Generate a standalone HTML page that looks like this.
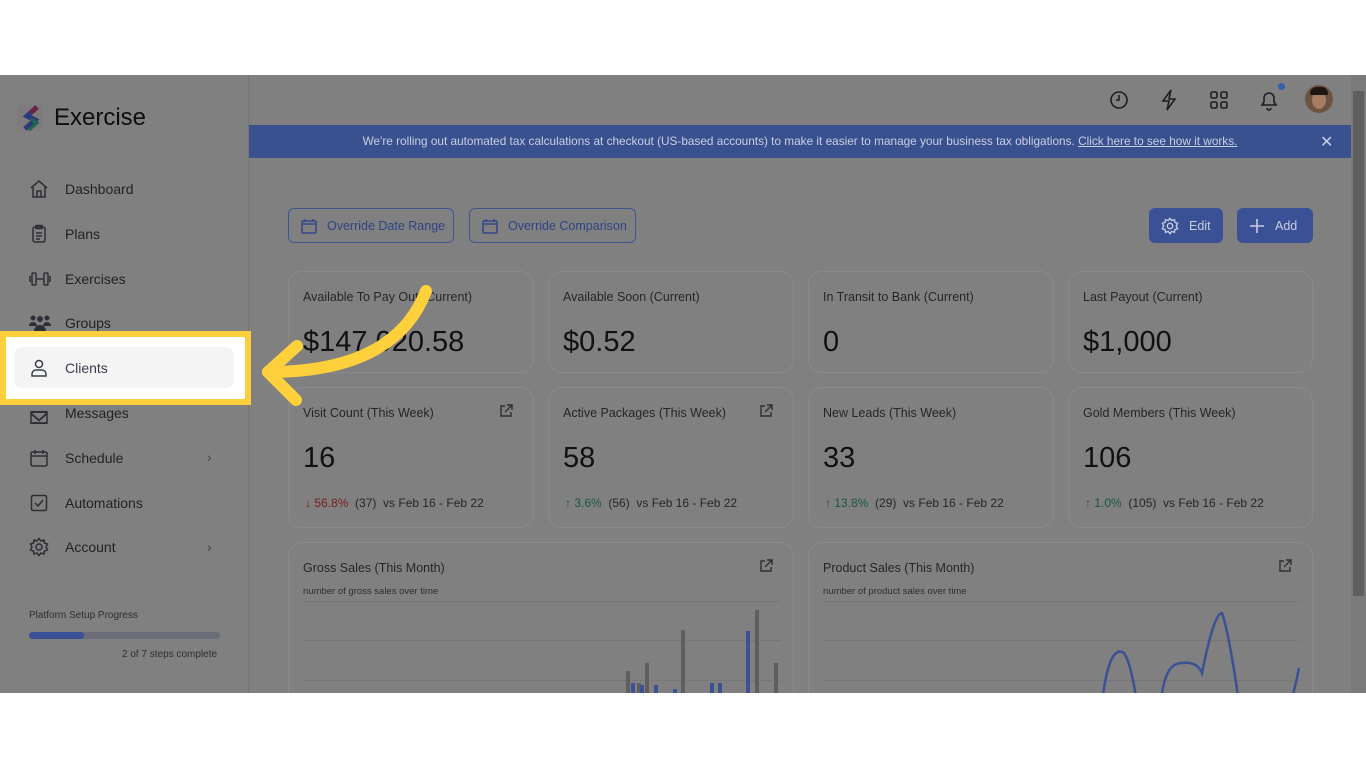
<!DOCTYPE html>
<html><head><meta charset="utf-8"><style>
*{box-sizing:border-box;margin:0;padding:0}
body{width:1366px;height:768px;background:#fff;font-family:"Liberation Sans",sans-serif;position:relative;overflow:hidden}
.app{position:absolute;left:0;top:75px;width:1366px;height:618px;background:#808080;overflow:hidden}
.side{position:absolute;left:0;top:0;width:249px;height:618px;border-right:1px solid #767676;background:#808080}
.abs{position:absolute}
.nav{position:absolute;left:65px;font-size:14px;color:#222226}
.ico{position:absolute;left:29px}
.card{position:absolute;border:1px solid #8a8a8a;border-radius:14px;background:#808080}
.lbl{position:absolute;left:14px;top:18px;font-size:12.5px;color:#26262a}
.big{position:absolute;left:14px;top:54px;font-size:29px;color:#111113}
.ext{position:absolute;right:20px;top:16px}
.foot{position:absolute;left:16px;top:108px;font-size:12px;color:#26262a;white-space:nowrap}
.btn{position:absolute;top:133px;height:35px;border:1px solid #3d5591;border-radius:6px;font-size:12.5px;color:#2f4485;display:flex;align-items:center;padding-left:12px;gap:10px}
.bbtn{position:absolute;top:133px;height:35px;background:#3a5195;border-radius:6px;font-size:12.5px;color:#c8cde0;display:flex;align-items:center;padding-left:12px;gap:10px}
.grid{position:absolute;left:14px;right:12px;border-top:1px dotted #6e6e6e}
</style></head><body>
<div class="app">
<div class="side">
  <svg class="abs" style="left:17px;top:30px" width="26" height="26" viewBox="0 0 26 26"><rect width="26" height="26" rx="4" fill="#7d7478" opacity=".5"/><path d="M20 2 L10 11 L18 15 L8 24" stroke="#2b3a7a" stroke-width="5" fill="none"/><path d="M14 14 L20 18 L12 25" stroke="#1d6a4a" stroke-width="3" fill="none"/><path d="M20 2 L14 8" stroke="#7a1f3a" stroke-width="4"/></svg>
  <div class="abs" style="left:54px;top:29px;font-size:24px;color:#0e0e10">Exercise</div>
  <svg class="ico" style="top:104px" width="20" height="20" viewBox="0 0 20 20" fill="none" stroke="#2e2e34" stroke-width="1.5"><path d="M2 9 L10 2 L18 9 M4 8 V18 H16 V8 M8 18 V12 H12 V18"/></svg>
  <div class="nav" style="top:106px">Dashboard</div>
  <svg class="ico" style="top:149px" width="20" height="20" viewBox="0 0 20 20" fill="none" stroke="#2e2e34" stroke-width="1.5"><rect x="4" y="3" width="12" height="15" rx="2"/><rect x="7" y="1.5" width="6" height="3"/><path d="M7 9h6M7 12h6M7 15h4"/></svg>
  <div class="nav" style="top:151px">Plans</div>
  <svg class="ico" style="top:194px" width="22" height="20" viewBox="0 0 22 20" fill="none" stroke="#2e2e34" stroke-width="1.5"><rect x="3" y="4" width="4" height="12" rx="1"/><rect x="15" y="4" width="4" height="12" rx="1"/><path d="M1 7v6M21 7v6M7 10h8"/></svg>
  <div class="nav" style="top:196px">Exercises</div>
  <svg class="ico" style="top:239px" width="22" height="18" viewBox="0 0 22 18" fill="#2e2e34"><circle cx="4" cy="4" r="2.5"/><circle cx="11" cy="5" r="3"/><circle cx="18" cy="4" r="2.5"/><path d="M0 12a4 4 0 0 1 8 0zM14 12a4 4 0 0 1 8 0zM5 17a6 6 0 0 1 12 0z"/></svg>
  <div class="nav" style="top:240px">Groups</div>
  <svg class="ico" style="top:329px" width="20" height="20" viewBox="0 0 20 20" fill="none" stroke="#2e2e34" stroke-width="1.5"><path d="M2 18 V10 H18 V18 Z M2 11 L10 16 L18 11" transform="translate(0,-6) scale(1,1.4)"/></svg>
  <div class="nav" style="top:330px">Messages</div>
  <svg class="ico" style="top:373px" width="20" height="20" viewBox="0 0 20 20" fill="none" stroke="#2e2e34" stroke-width="1.5"><rect x="2" y="4" width="16" height="14" rx="1.5"/><path d="M2 8h16M6 2v4M14 2v4"/></svg>
  <div class="nav" style="top:375px">Schedule</div>
  <div class="abs" style="left:207px;top:374px;font-size:14px;color:#444">›</div>
  <svg class="ico" style="top:418px" width="20" height="20" viewBox="0 0 20 20" fill="none" stroke="#2e2e34" stroke-width="1.5"><rect x="2.5" y="2.5" width="15" height="15" rx="1.5"/><path d="M6 10l3 3 5-6"/></svg>
  <div class="nav" style="top:420px">Automations</div>
  <svg class="ico" style="top:462px" width="20" height="20" viewBox="0 0 20 20" fill="none" stroke="#2e2e34" stroke-width="1.5"><circle cx="10" cy="10" r="3"/><path d="M10 1.5l2 2.5 3-1 .5 3 3 1-1.5 3 1.5 3-3 1-.5 3-3-1-2 2.5-2-2.5-3 1-.5-3-3-1L3 10 1.5 7l3-1 .5-3 3 1z"/></svg>
  <div class="nav" style="top:464px">Account</div>
  <div class="abs" style="left:207px;top:464px;font-size:14px;color:#444">›</div>
  <div class="abs" style="left:29px;top:535px;font-size:10px;color:#2e2e34">Platform Setup Progress</div>
  <div class="abs" style="left:29px;top:557px;width:191px;height:7px;border-radius:4px;background:#6b6e7a"></div>
  <div class="abs" style="left:29px;top:557px;width:55px;height:7px;border-radius:4px;background:#3a5195"></div>
  <div class="abs" style="left:122px;top:574px;font-size:10px;color:#2e2e34">2 of 7 steps complete</div>
</div>
<svg class="abs" style="left:1109px;top:15px" width="20" height="20" viewBox="0 0 20 20" fill="none" stroke="#1e1e22" stroke-width="1.6"><circle cx="10" cy="10" r="8"/><path d="M10 5v5h-3"/></svg>
<svg class="abs" style="left:1160px;top:14px" width="18" height="22" viewBox="0 0 18 22" fill="none" stroke="#1e1e22" stroke-width="1.6"><path d="M11 1L3 12h6l-2 9 8-11H9z"/></svg>
<svg class="abs" style="left:1210px;top:16px" width="18" height="18" viewBox="0 0 18 18" fill="none" stroke="#1e1e22" stroke-width="1.6"><rect x="1" y="1" width="6" height="6" rx="1.5"/><rect x="11" y="1" width="6" height="6" rx="1.5"/><rect x="1" y="11" width="6" height="6" rx="1.5"/><rect x="11" y="11" width="6" height="6" rx="1.5"/></svg>
<svg class="abs" style="left:1259px;top:14px" width="20" height="22" viewBox="0 0 20 22" fill="none" stroke="#1e1e22" stroke-width="1.6"><path d="M3 16h14l-2-3V9a5 5 0 0 0-10 0v4z M8 19a2 2 0 0 0 4 0"/></svg>
<div class="abs" style="left:1278px;top:8px;width:7px;height:7px;border-radius:50%;background:#3a5ab0"></div>
<div class="abs" style="left:1305px;top:10px;width:28px;height:28px;border-radius:50%;background:#6e5342;overflow:hidden"><div style="position:absolute;left:7px;top:6px;width:14px;height:18px;border-radius:50%;background:#a57d62"></div><div style="position:absolute;left:5px;top:2px;width:18px;height:8px;border-radius:8px 8px 2px 2px;background:#1c1512"></div></div>
<div class="abs" style="left:249px;top:50px;width:1102px;height:33px;background:#3a5190;color:#c9cfe0;font-size:11.8px;text-align:center;line-height:33px">We're rolling out automated tax calculations at checkout (US-based accounts) to make it easier to manage your business tax obligations. <u>Click here to see how it works.</u></div>
<div class="abs" style="left:1320px;top:57px;color:#c9cfe0;font-size:16px">✕</div>
<div class="abs" style="left:1351px;top:0;width:15px;height:618px;background:#7a7a7a"></div>
<div class="abs" style="left:1353px;top:16px;width:11px;height:505px;background:#5f5f5f"></div>
<div class="btn" style="left:288px;width:166px"><svg width="16" height="16" viewBox="0 0 16 16" fill="none" stroke="#34488a" stroke-width="1.6"><rect x="1" y="3" width="14" height="12" rx="1"/><path d="M1 6h14M4 1v3M12 1v3"/></svg>Override Date Range</div>
<div class="btn" style="left:469px;width:167px"><svg width="16" height="16" viewBox="0 0 16 16" fill="none" stroke="#34488a" stroke-width="1.6"><rect x="1" y="3" width="14" height="12" rx="1"/><path d="M1 6h14M4 1v3M12 1v3"/></svg>Override Comparison</div>
<div class="bbtn" style="left:1149px;width:74px"><svg width="18" height="18" viewBox="0 0 20 20" fill="none" stroke="#c8cde0" stroke-width="1.5"><circle cx="10" cy="10" r="3"/><path d="M10 1.5l2 2.5 3-1 .5 3 3 1-1.5 3 1.5 3-3 1-.5 3-3-1-2 2.5-2-2.5-3 1-.5-3-3-1L3 10 1.5 7l3-1 .5-3 3 1z"/></svg>Edit</div>
<div class="bbtn" style="left:1237px;width:76px"><svg width="16" height="16" viewBox="0 0 16 16" stroke="#c8cde0" stroke-width="1.6"><path d="M8 1v14M1 8h14"/></svg>Add</div>
<div class="card" style="left:288px;top:196px;width:246px;height:102px"><div class="lbl">Available To Pay Out (Current)</div><div class="big">$147,020.58</div></div>
<div class="card" style="left:548px;top:196px;width:246px;height:102px"><div class="lbl">Available Soon (Current)</div><div class="big">$0.52</div></div>
<div class="card" style="left:808px;top:196px;width:246px;height:102px"><div class="lbl">In Transit to Bank (Current)</div><div class="big">0</div></div>
<div class="card" style="left:1068px;top:196px;width:245px;height:102px"><div class="lbl">Last Payout (Current)</div><div class="big">$1,000</div></div>
<div class="card" style="left:288px;top:312px;width:246px;height:141px"><div class="lbl">Visit Count (This Week)</div><svg class="ext" width="14" height="14" viewBox="0 0 14 14" fill="none" stroke="#2e2e34" stroke-width="1.4"><path d="M6 2H2v10h10V8M8 1h5v5M13 1L6 8"/></svg><div class="big">16</div><div class="foot"><span style="color:#7a1c1c">↓ 56.8%</span> &nbsp;(37) &nbsp;vs Feb 16 - Feb 22</div></div>
<div class="card" style="left:548px;top:312px;width:246px;height:141px"><div class="lbl">Active Packages (This Week)</div><svg class="ext" width="14" height="14" viewBox="0 0 14 14" fill="none" stroke="#2e2e34" stroke-width="1.4"><path d="M6 2H2v10h10V8M8 1h5v5M13 1L6 8"/></svg><div class="big">58</div><div class="foot"><span style="color:#1a573b">↑ 3.6%</span> &nbsp;(56) &nbsp;vs Feb 16 - Feb 22</div></div>
<div class="card" style="left:808px;top:312px;width:246px;height:141px"><div class="lbl">New Leads (This Week)</div><div class="big">33</div><div class="foot"><span style="color:#1a573b">↑ 13.8%</span> &nbsp;(29) &nbsp;vs Feb 16 - Feb 22</div></div>
<div class="card" style="left:1068px;top:312px;width:245px;height:141px"><div class="lbl">Gold Members (This Week)</div><div class="big">106</div><div class="foot"><span style="color:#1a573b">↑ 1.0%</span> &nbsp;(105) &nbsp;vs Feb 16 - Feb 22</div></div>
<div class="card" style="left:288px;top:467px;width:506px;height:200px">
 <div class="lbl">Gross Sales (This Month)</div><svg class="ext" width="14" height="14" viewBox="0 0 14 14" fill="none" stroke="#2e2e34" stroke-width="1.4"><path d="M6 2H2v10h10V8M8 1h5v5M13 1L6 8"/></svg>
 <div class="abs" style="left:14px;top:43px;font-size:9.5px;color:#2e2e34">number of gross sales over time</div>
 <div class="grid" style="top:58px"></div><div class="grid" style="top:97px"></div><div class="grid" style="top:137px"></div>
 <svg class="abs" style="left:0;top:60px" width="506" height="100"><g stroke-width="4"><path d="M339 68V100M358 60V100M394 27V100M468 7V100M487 60V100M350 80V100" stroke="#5e5e5e"/><path d="M344 80V100M353 82V100M367 82V100M386 86V100M423 80V100M431 80V100M459 28V100" stroke="#3a5195"/></g></svg>
</div>
<div class="card" style="left:808px;top:467px;width:505px;height:200px">
 <div class="lbl">Product Sales (This Month)</div><svg class="ext" width="14" height="14" viewBox="0 0 14 14" fill="none" stroke="#2e2e34" stroke-width="1.4"><path d="M6 2H2v10h10V8M8 1h5v5M13 1L6 8"/></svg>
 <div class="abs" style="left:14px;top:43px;font-size:9.5px;color:#2e2e34">number of product sales over time</div>
 <div class="grid" style="top:58px"></div><div class="grid" style="top:97px"></div><div class="grid" style="top:137px"></div>
 <svg class="abs" style="left:0;top:60px" width="505" height="100"><path d="M180 100 Q186 85 192 100 M293 100 Q300 40 315 50 Q322 60 328 100 M352 100 Q355 60 373 60 Q388 58 393 70 Q405 10 413 10 Q420 30 430 100 M482 100 Q487 80 490 65" stroke="#3a5195" stroke-width="2.5" fill="none"/></svg>
</div>
</div>
<div class="abs" style="left:0;top:331px;width:251px;height:74px;border:6px solid #fbd03c;background:#fff"></div>
<div class="abs" style="left:14px;top:347px;width:220px;height:41px;border-radius:8px;background:#f4f4f4"></div>
<svg class="abs" style="left:29px;top:358px" width="20" height="20" viewBox="0 0 20 20" fill="none" stroke="#3a3e4a" stroke-width="1.5"><circle cx="10" cy="6" r="3.5"/><path d="M3 18v-2a4 4 0 0 1 4-4h6a4 4 0 0 1 4 4v2z"/></svg>
<div class="nav" style="top:360px;color:#3a3e4a">Clients</div>
<svg class="abs" style="left:0;top:0" width="1366" height="768" fill="none" stroke="#fdd03c" stroke-width="12" stroke-linecap="round" stroke-linejoin="round"><path d="M426 291 Q395 372 268 372"/><path d="M297 346 L268 372 L296 400"/></svg>
</body></html>
